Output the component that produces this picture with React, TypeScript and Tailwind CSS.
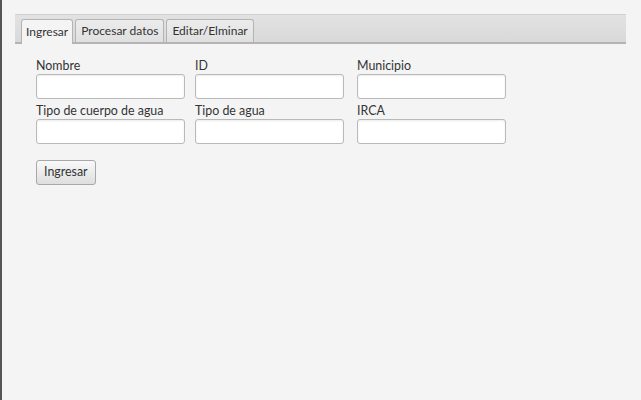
import React from "react";

const Field: React.FC<{ label: string }> = ({ label }) => (
  <div className="flex flex-col w-[149px]">
    <label className="h-[18px] pt-[2px] text-[12.4px] leading-[16px] text-[#333]">{label}</label>
    <input
      type="text"
      className="h-[25px] w-full rounded-[3px] border border-[#b9b9b9] bg-white shadow-[inset_0_1px_2px_rgba(0,0,0,0.08)] outline-none"
    />
  </div>
);

const tabs = ["Ingresar", "Procesar datos", "Editar/Elminar"];

export default function App() {
  return (
    <div
      className="h-[400px] w-[641px] overflow-hidden border-l-2 border-[#555] bg-[#f4f4f4] text-[#333]"
      style={{ fontFamily: '"Segoe UI", Lato, "Noto Sans", sans-serif' }}
    >
      <div className="pl-[13px] pr-[15px] pt-[14px]">
        {/* Tab header */}
        <div className="flex h-[30px] items-end gap-[2px] border-b-2 border-[#b4b4b4] bg-gradient-to-b from-[#e2e2e2] to-[#d9d9d9] pl-[6px] pr-1 shadow-[inset_0_1px_0_#d0d0d0]">
          {tabs.map((t, i) => (
            <div
              key={t}
              className={
                i === 0
                  ? "-mb-[2px] flex h-[25px] items-center rounded-t-[3px] border border-b-0 border-[#b4b4b4] bg-[#f4f4f4] px-[4px] text-[12px]"
                  : "flex h-[23px] items-center rounded-t-[3px] border border-b-0 border-[#b4b4b4] bg-gradient-to-b from-[#ececec] to-[#e0e0e0] px-[5px] text-[12px]"
              }
            >
              {t}
            </div>
          ))}
        </div>

        {/* Form */}
        <div className="pl-[21px] pt-[12px]">
          <div className="grid grid-cols-[149px_149px_149px] gap-x-[10px] gap-y-[2px] [&>*:nth-child(3n)]:ml-[3px]">
            <Field label="Nombre" />
            <Field label="ID" />
            <Field label="Municipio" />
            <Field label="Tipo de cuerpo de agua" />
            <Field label="Tipo de agua" />
            <Field label="IRCA" />
          </div>
          <button className="mt-[16px] h-[25px] rounded-[3px] border border-[#a8a8a8] bg-gradient-to-b from-[#f9f9f9] to-[#dedede] px-[7px] text-[12.4px] text-[#333]">
            Ingresar
          </button>
        </div>
      </div>
    </div>
  );
}
